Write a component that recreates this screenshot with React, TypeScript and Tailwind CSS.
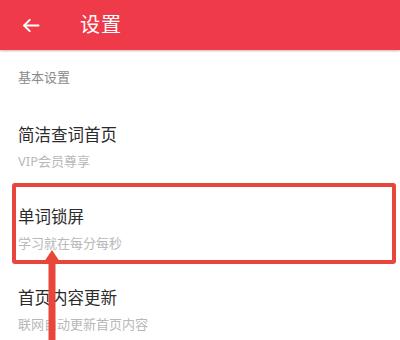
import React from 'react';

const items = [
  { title: "简洁查词首页", desc: "VIP会员尊享" },
  { title: "单词锁屏", desc: "学习就在每分每秒" },
  { title: "首页内容更新", desc: "联网自动更新首页内容" },
];

export default function App() {
  return (
    <div
      className="relative w-[400px] h-[340px] overflow-hidden bg-white"
      style={{ fontFamily: '"Noto Sans", "Noto Sans CJK SC", sans-serif' }}
    >
      {/* Header */}
      <div className="h-[50px] bg-[#ef3a4a] flex items-center shadow-[0_1px_2px_rgba(150,20,30,0.35)]">
        <div className="w-[80px] pl-[21px] flex items-center">
          <svg viewBox="0 0 24 24" className="w-[21px] h-[21px]" fill="none" stroke="white" strokeWidth="2.2" strokeLinecap="round" strokeLinejoin="round">
            <path d="M20 12H4" />
            <path d="M10 5.5L3.5 12L10 18.5" />
          </svg>
        </div>
        <span className="text-white text-[20px] leading-none tracking-[1px]">设置</span>
      </div>

      {/* Section label */}
      <div className="h-[56px] pt-[20px] pl-[18px] text-[13px] leading-[15px] text-[#8a8a8a]">
        基本设置
      </div>

      {/* Items */}
      <div className="flex flex-col">
        {items.map((it) => (
          <div key={it.title} className="pl-[18px] py-[18px] h-[81.5px]">
            <div className="text-[16.5px] leading-[22px] text-[#2b2b2b]">{it.title}</div>
            <div className="mt-[6px] text-[13px] leading-[18px] text-[#b8b8b8]">{it.desc}</div>
          </div>
        ))}
      </div>

      {/* Annotation box */}
      <div className="absolute left-[12px] top-[183px] w-[384px] h-[81px] border-[4px] border-[#e8463a] rounded-[3px]" />

      {/* Annotation arrow */}
      <svg className="absolute left-[38px] top-[248px] w-[28px] h-[92px]" viewBox="0 0 28 92">
        <polygon points="14,2 6,14 22,14" fill="#e8463a" />
        <rect x="10.5" y="10" width="7" height="82" fill="#e8463a" />
      </svg>
    </div>
  );
}
